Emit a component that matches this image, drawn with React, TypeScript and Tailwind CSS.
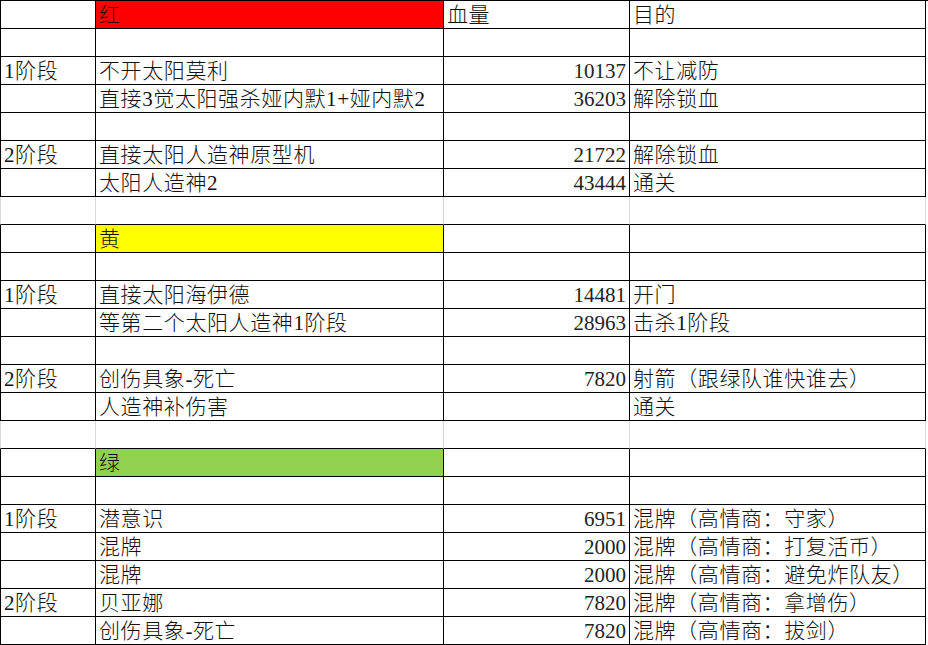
type Row = {
  kind: 'data' | 'gap';
  a?: string;
  b?: string;
  c?: string;
  d?: string;
  fill?: string;
};

const rows: Row[] = [
  { kind: 'data', b: '红', c: '血量', d: '目的', fill: 'bg-[#ff0000]' },
  { kind: 'data' },
  { kind: 'data', a: '1阶段', b: '不开太阳莫利', c: '10137', d: '不让减防' },
  { kind: 'data', b: '直接3觉太阳强杀娅内默1+娅内默2', c: '36203', d: '解除锁血' },
  { kind: 'data' },
  { kind: 'data', a: '2阶段', b: '直接太阳人造神原型机', c: '21722', d: '解除锁血' },
  { kind: 'data', b: '太阳人造神2', c: '43444', d: '通关' },
  { kind: 'gap' },
  { kind: 'data', b: '黄', fill: 'bg-[#ffff00]' },
  { kind: 'data' },
  { kind: 'data', a: '1阶段', b: '直接太阳海伊德', c: '14481', d: '开门' },
  { kind: 'data', b: '等第二个太阳人造神1阶段', c: '28963', d: '击杀1阶段' },
  { kind: 'data' },
  { kind: 'data', a: '2阶段', b: '创伤具象-死亡', c: '7820', d: '射箭（跟绿队谁快谁去）' },
  { kind: 'data', b: '人造神补伤害', d: '通关' },
  { kind: 'gap' },
  { kind: 'data', b: '绿', fill: 'bg-[#92d050]' },
  { kind: 'data' },
  { kind: 'data', a: '1阶段', b: '潜意识', c: '6951', d: '混牌（高情商：守家）' },
  { kind: 'data', b: '混牌', c: '2000', d: '混牌（高情商：打复活币）' },
  { kind: 'data', b: '混牌', c: '2000', d: '混牌（高情商：避免炸队友）' },
  { kind: 'data', a: '2阶段', b: '贝亚娜', c: '7820', d: '混牌（高情商：拿增伤）' },
  { kind: 'data', b: '创伤具象-死亡', c: '7820', d: '混牌（高情商：拔剑）' },
];

const isNum = (s?: string) => !!s && /^\d+$/.test(s);

function Cell({ text, gap, first, fill }: { text?: string; gap: boolean; first?: boolean; fill?: string }) {
  const line = gap ? 'border-r-[#d9d9d9]' : 'border-r-black';
  const num = isNum(text);
  return (
    <div
      className={`h-[28px] flex items-end overflow-visible whitespace-nowrap border-r border-b border-b-black ${line} ${
        first ? (gap ? 'border-l border-l-[#d9d9d9]' : 'border-l border-l-black') : ''
      } ${fill ?? ''} ${num ? 'justify-end pr-[3px] text-[#222]' : 'pl-[3px] tracking-[0.6px]'}`}
    >
      <span className="leading-[24px] pb-[1px]">{text}</span>
    </div>
  );
}

export default function App() {
  return (
    <div
      className="w-[928px] h-[645px] bg-white text-[#111] text-[21px] font-light overflow-hidden"
      style={{ fontFamily: '"Liberation Serif", "Noto Sans CJK SC", serif' }}
    >
      <div className="grid grid-cols-[96px_348px_186px_296px] border-t border-black">
        {rows.map((r, i) => {
          const gap = r.kind === 'gap';
          return (
            <div key={i} className="contents">
              <Cell text={r.a} gap={gap} first />
              <Cell text={r.b} gap={gap} fill={r.fill} />
              <Cell text={r.c} gap={gap} />
              <Cell text={r.d} gap={gap} />
            </div>
          );
        })}
      </div>
    </div>
  );
}
